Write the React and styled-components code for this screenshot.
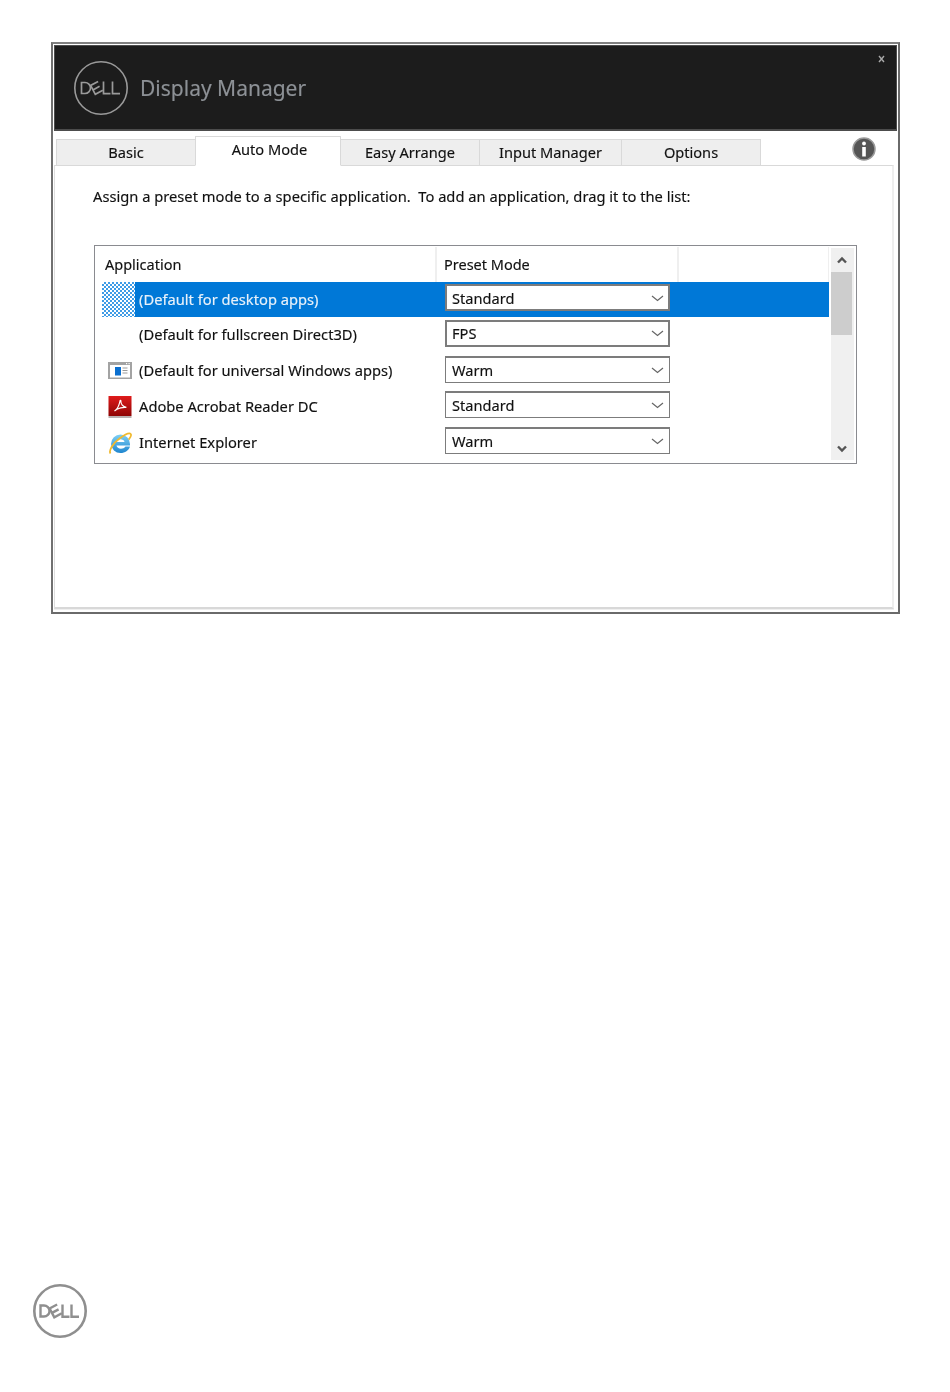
import React from "react";
import styled, { createGlobalStyle } from "styled-components";

const Global = createGlobalStyle`
  html, body { margin: 0; padding: 0; background: #fff; }
  * { box-sizing: border-box; }
`;

const Page = styled.div`
  width: 950px;
  height: 1392px;
  display: flex;
  flex-direction: column;
  justify-content: space-between;
  padding: 42px 0 54px 33px;
  font-family: "Noto Sans", "Open Sans", sans-serif;
  color: #111;
  -webkit-text-stroke: 0.15px;
`;

const Window = styled.div`
  width: 849px;
  height: 572px;
  margin-left: 18px;
  border: 2px solid #6a6a6a;
  border-top-color: #808080;
  border-left-color: #707070;
  padding: 1px;
  background: #fff;
  display: flex;
  flex-direction: column;
  filter: blur(0.3px);
`;

const Header = styled.header`
  height: 86px;
  background: #1c1c1c;
  border: 1px solid #4c4c4c;
  border-bottom-width: 2px;
  display: flex;
  align-items: center;
  gap: 11px;
  padding: 0 11px 0 19px;
  flex: none;
`;

const Title = styled.h1`
  margin: 0 0 0 1px;
  font-size: 21px;
  font-weight: 400;
  color: #8d9196;
  flex: 1;
`;

const CloseMark = styled.svg`
  width: 7px;
  height: 8px;
  align-self: flex-start;
  margin-top: 9px;
`;

const TabBar = styled.nav`
  height: 35px;
  display: flex;
  align-items: flex-end;
  padding-left: 2px;
  margin-bottom: -1px;
  position: relative;
  z-index: 1;
  flex: none;
`;

const Tab = styled.div`
  width: ${(p) => p.$w}px;
  height: ${(p) => (p.$active ? 30 : 27)}px;
  background: ${(p) => (p.$active ? "#fff" : "#eeeeee")};
  border: 1px solid #d9d9d9;
  border-bottom-color: ${(p) => (p.$active ? "#fff" : "#d9d9d9")};
  border-left-width: ${(p) => (p.$first || p.$active ? 1 : 0)}px;
  display: flex;
  align-items: center;
  justify-content: center;
  font-size: 14.6px;
  line-height: 20px;
  padding: ${(p) => (p.$active ? "0 0 5px 3px" : "0 0 1px 0")};
  margin-left: ${(p) => (p.$active ? "-1px" : 0)};
`;

const InfoIcon = styled.svg`
  width: 24px;
  height: 24px;
  margin: 0 21px 5px auto;
  align-self: flex-end;
`;

const Panel = styled.main`
  height: 444px;
  margin-right: 3px;
  background: #fff;
  border-top: 1px solid #d9d9d9;
  border-left: 1px solid #dedede;
  border-right: 2px solid #eeeeee;
  border-bottom: 2px solid #d8d8d8;
  box-shadow: 0 1px 0 #efefef;
  padding: 20px 0 0 39px;
  flex: none;
`;

const Intro = styled.p`
  margin: 0 0 0 -1px;
  font-size: 14.7px;
  line-height: 20px;
  white-space: pre;
`;

const ListBox = styled.section`
  margin-top: 39px;
  width: 763px;
  height: 219px;
  border: 1px solid #8a8b90;
  display: flex;
  overflow: hidden;
`;

const Table = styled.div`
  width: 734px;
  flex: none;
`;

const HeadRow = styled.div`
  height: 36px;
  display: grid;
  grid-template-columns: 340px 242px 1fr;
`;

const HeadCell = styled.div`
  font-size: 14.5px;
  line-height: 20px;
  padding: 7px 0 0 ${(p) => (p.$first ? 10 : 7)}px;
  margin-top: 1px;
  border-left: ${(p) => (p.$first ? "none" : "2px solid #efefef")};
`;

const FillerCell = styled(HeadCell)`
  border-right: 1px solid #efefef;
`;

const Row = styled.div`
  height: 35.75px;
  margin-left: 7px;
  margin-top: ${(p) => (p.$selected ? "-0.3px" : 0)};
  display: grid;
  grid-template-columns: 33px 310px 225px 1fr;
  background: ${(p) => (p.$selected ? "#0078d7" : "transparent")};
  color: ${(p) => (p.$selected ? "#e8f1fa" : "#111")};
`;

const IconCell = styled.div`
  display: flex;
  align-items: center;
  justify-content: center;
  padding-left: 3px;
`;

const Dither = styled.div`
  width: 33px;
  height: 35.75px;
  margin-left: -3px;
  background: repeating-conic-gradient(#3f9ce6 0 25%, #ffffff 0 50%) 0 0 / 4px 4px;
`;

const Name = styled.div`
  font-size: 14.7px;
  line-height: 20px;
  padding: 7px 0 0 4px;
  white-space: nowrap;
`;

const SelectBox = styled.div`
  height: 27px;
  margin-top: 2.5px;
  background: #fff;
  border: ${(p) => (p.$thick ? 2 : 1)}px solid #7c7c7c;
  border-top-width: 2px;
  display: flex;
  align-items: center;
  justify-content: space-between;
  padding: 0 ${(p) => (p.$thick ? 4 : 5)}px 0 ${(p) => (p.$thick ? 5 : 6)}px;
  font-size: 14.6px;
  color: #111;
`;

const Chevron = styled.svg`
  width: 13px;
  height: 8px;
  flex: none;
`;

const ScrollTrack = styled.div`
  width: 23px;
  height: 212px;
  margin: 2px 2px 0 2px;
  background: #f0f0f0;
  display: flex;
  flex-direction: column;
  flex: none;
`;

const ArrowButton = styled.svg`
  width: 10px;
  height: 8px;
  margin: ${(p) => (p.$down ? "auto 0 7px 6px" : "8px 0 0 6px")};
  flex: none;
`;

const Thumb = styled.div`
  width: 21px;
  height: 63px;
  margin-top: 8px;
  background: #cdcdcd;
  flex: none;
`;

const BrandMark = styled.svg`
  width: 54px;
  height: 54px;
  flex: none;
`;

const FooterRow = styled.footer`
  display: flex;
  filter: blur(0.5px);
`;

function DellLogo({ color, ring, weight }) {
  return (
    <BrandMark viewBox="0 0 54 54" role="img" aria-label="Dell">
      <circle cx="27" cy="27" r={27 - ring / 2} fill="none" stroke={color} strokeWidth={ring} />
      <g fill="none" stroke={color} strokeWidth={weight}>
        <path d="M7.500 21.500h3.500a5.500 5.500 0 0 1 0 11H7.500z" />
        <path transform="rotate(-28 22.500 27)" d="M27 22H18.500V32H27M18.500 27H26" />
        <path d="M29.500 20.500v12.200h7M38.500 20.500v12.200h7.500" />
      </g>
    </BrandMark>
  );
}

const ChevronGlyph = () => (
  <Chevron viewBox="0 0 13 8">
    <path d="M1 2l5.500 4.500L12 2" fill="none" stroke="#666" strokeWidth="1.2" />
  </Chevron>
);

const WindowsAppIcon = () => (
  <svg width="24" height="18" viewBox="0 0 24 18">
    <rect width="24" height="17" fill="#a3a3a3" />
    <rect x="2" y="3" width="20" height="12.500" fill="#fff" />
    <rect x="18" y="1" width="1.200" height="1.200" fill="#fff" />
    <rect x="20.500" y="1" width="1.200" height="1.200" fill="#fff" />
    <rect x="7" y="5" width="6" height="8.500" fill="#0a6fd0" />
    <path d="M14.500 6h5M14.500 8.500h5M14.500 11h5" stroke="#9a9a9a" strokeWidth="1" />
  </svg>
);

const AcrobatIcon = () => (
  <svg width="24" height="24" viewBox="0 0 24 24">
    <defs>
      <linearGradient id="acrobatRed" x1="0" y1="0" x2="0" y2="1">
        <stop offset="0" stopColor="#e01b1b" />
        <stop offset="1" stopColor="#8e0404" />
      </linearGradient>
    </defs>
    <rect x="0.500" y="1" width="23" height="20" fill="url(#acrobatRed)" />
    <rect x="0.500" y="21" width="23" height="2" fill="#b9b0b0" />
    <path
      d="M6.500 16c2.500-1.500 4.500-5 5.500-10 .3-1 1-.8.9.4-.2 2.500 2 5.500 5.500 6-3-.2-6.500.2-9.500 1.900z"
      fill="none"
      stroke="#fff"
      strokeWidth="1.200"
    />
  </svg>
);

const ExplorerIcon = () => (
  <svg width="25" height="24" viewBox="0 0 25 24">
    <defs>
      <linearGradient id="ieBlue" x1="0" y1="0" x2="0" y2="1">
        <stop offset="0" stopColor="#7fd0f5" />
        <stop offset="1" stopColor="#1f86cf" />
      </linearGradient>
    </defs>
    <path
      d="M3 13a9.500 9.500 0 0 1 19 0v1.500H8.500c.3 3.500 6.500 4.500 9 1h4.500c-1.200 4-5 6.500-9.500 6.500A9.500 9.500 0 0 1 3 13zM8.500 11h8c-.3-3.800-7.700-3.800-8 0z"
      fill="url(#ieBlue)"
      fillRule="evenodd"
    />
    <path
      d="M2.500 22.500c-2-2.500 2-10 9-15 5.500-4 10-5.800 11.200-4.500 1 1.200-.2 3.400-2 5.600"
      fill="none"
      stroke="#f0b92e"
      strokeWidth="1.800"
    />
  </svg>
);

const tabs = [
  { label: "Basic", w: 140, first: true },
  { label: "Auto Mode", w: 146, active: true },
  { label: "Easy Arrange", w: 139 },
  { label: "Input Manager", w: 142 },
  { label: "Options", w: 139 },
];

const rows = [
  { name: "(Default for desktop apps)", mode: "Standard", icon: <Dither />, selected: true, thick: true },
  { name: "(Default for fullscreen Direct3D)", mode: "FPS", icon: null, thick: true },
  { name: "(Default for universal Windows apps)", mode: "Warm", icon: <WindowsAppIcon /> },
  { name: "Adobe Acrobat Reader DC", mode: "Standard", icon: <AcrobatIcon /> },
  { name: "Internet Explorer", mode: "Warm", icon: <ExplorerIcon /> },
];

export default function App() {
  return (
    <>
      <Global />
      <Page>
        <Window>
          <Header>
            <DellLogo color="#9a9a9a" ring="1.600" weight="1.700" />
            <Title>Display Manager</Title>
            <CloseMark viewBox="0 0 7 8">
              <path d="M1 1l5 6M6 1L1 7" stroke="#a8a8a8" strokeWidth="1.400" />
            </CloseMark>
          </Header>
          <TabBar>
            {tabs.map((t) => (
              <Tab key={t.label} $w={t.w} $active={t.active} $first={t.first}>
                {t.label}
              </Tab>
            ))}
            <InfoIcon viewBox="0 0 24 24">
              <circle cx="12" cy="12" r="11" fill="#555" stroke="#9a9a9a" strokeWidth="1.500" />
              <circle cx="12" cy="6.500" r="1.900" fill="#fff" />
              <rect x="10.200" y="10" width="3.600" height="9.500" fill="#fff" />
            </InfoIcon>
          </TabBar>
          <Panel>
            <Intro>Assign a preset mode to a specific application.  To add an application, drag it to the list:</Intro>
            <ListBox>
              <Table>
                <HeadRow>
                  <HeadCell $first>Application</HeadCell>
                  <HeadCell>Preset Mode</HeadCell>
                  <FillerCell />
                </HeadRow>
                {rows.map((r) => (
                  <Row key={r.name} $selected={r.selected}>
                    <IconCell>{r.icon}</IconCell>
                    <Name>{r.name}</Name>
                    <SelectBox $thick={r.thick}>
                      {r.mode}
                      <ChevronGlyph />
                    </SelectBox>
                  </Row>
                ))}
              </Table>
              <ScrollTrack>
                <ArrowButton viewBox="0 0 10 8">
                  <path d="M1 6.500L5 2.500l4 4" fill="none" stroke="#555" strokeWidth="2.400" />
                </ArrowButton>
                <Thumb />
                <ArrowButton $down viewBox="0 0 10 8">
                  <path d="M1 1.500L5 5.500l4-4" fill="none" stroke="#555" strokeWidth="2.400" />
                </ArrowButton>
              </ScrollTrack>
            </ListBox>
          </Panel>
        </Window>
        <FooterRow>
          <DellLogo color="#8f8f8f" ring="2.600" weight="2.400" />
        </FooterRow>
      </Page>
    </>
  );
}
